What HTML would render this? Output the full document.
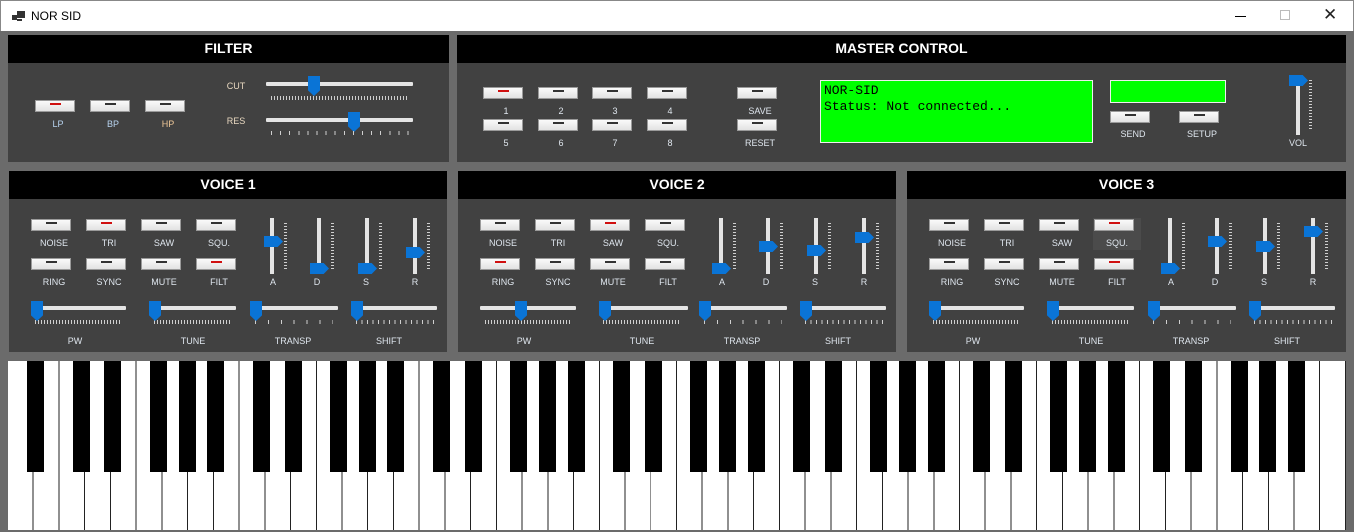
<!DOCTYPE html>
<html><head><meta charset="utf-8"><style>
*{margin:0;padding:0;box-sizing:border-box}
body{width:1354px;height:532px;background:#6b6b6b;position:relative;overflow:hidden;font-family:"Liberation Sans",Arial,sans-serif}
.a{position:absolute}
#title{left:0;top:0;width:1354px;height:31px;background:#fff;border:1px solid #888;border-bottom:none}
.hdr{position:absolute;background:#000;color:#fff;font-weight:bold;font-size:14px;text-align:center;line-height:27px}
.body{position:absolute;background:#414141}
.btn{position:absolute;width:40px;height:12px;background:linear-gradient(#fafafa,#e2e2e2);border:1px solid #9a9a9a}
.btn::after{content:"";position:absolute;left:14px;top:2px;width:11px;height:2px;background:#333}
.btn.r::after{background:#d01010}
.lb{position:absolute;color:#dfe6ee;font-size:9px;text-align:center;width:60px;margin-left:-30px}
.ht{position:absolute;height:4px;background:#e4e4e4;border-radius:1px}
.hth{position:absolute;width:12px;height:20px;background:#0a74d6;clip-path:polygon(0 0,100% 0,100% 72%,50% 100%,0 72%)}
.vt{position:absolute;width:4px;background:#e4e4e4}
.vth{position:absolute;width:19px;height:11px;background:#0a74d6;clip-path:polygon(0 0,72% 0,100% 50%,72% 100%,0 100%)}
.tk{position:absolute;height:4px;background:repeating-linear-gradient(90deg,#cfcfcf 0 1px,transparent 1px 3px)}
.vtk{position:absolute;width:3px;background:repeating-linear-gradient(180deg,#cfcfcf 0 1px,transparent 1px 3px)}
.v{position:absolute;top:171px;width:439px;height:181px}
.bk{position:absolute;top:361px;height:111px;width:17px;background:#000}
</style></head><body>
<div id="title" class="a">
 <div class="a" style="left:11px;top:14px;width:5px;height:5px;background:#333"></div>
 <div class="a" style="left:16px;top:10px;width:8px;height:7px;background:#333"></div>
 <div class="a" style="left:16px;top:18px;width:5px;height:2px;background:#333"></div>
 <div class="a" style="left:30px;top:8px;font-size:12px;color:#000">NOR SID</div>
 <div class="a" style="left:1234px;top:15px;width:11px;height:1px;background:#000"></div>
 <div class="a" style="left:1279px;top:9px;width:10px;height:10px;border:1px solid #bbb"></div>
 <div class="a" style="left:1322px;top:4px;font-size:17px;color:#222">✕</div>
</div>

<!-- FILTER -->
<div class="hdr" style="left:8px;top:35px;width:441px;height:28px">FILTER</div>
<div class="body" style="left:8px;top:63px;width:441px;height:99px"></div>
<div class="btn r" style="left:35px;top:100px"></div>
<div class="btn" style="left:90px;top:100px"></div>
<div class="btn" style="left:145px;top:100px"></div>
<div class="lb" style="left:58px;top:119px;color:#b8d4f0">LP</div>
<div class="lb" style="left:113px;top:119px;color:#b8d4f0">BP</div>
<div class="lb" style="left:168px;top:119px;color:#f0c898">HP</div>
<div class="lb" style="left:236px;top:81px;color:#e8d8c0">CUT</div>
<div class="lb" style="left:236px;top:116px;color:#e8d8c0">RES</div>
<div class="ht" style="left:266px;top:82px;width:147px"></div>
<div class="hth" style="left:308px;top:76px"></div>
<div class="tk" style="left:271px;top:96px;width:138px"></div>
<div class="ht" style="left:266px;top:118px;width:147px"></div>
<div class="hth" style="left:348px;top:112px"></div>
<div class="tk" style="left:271px;top:131px;width:138px;background:repeating-linear-gradient(90deg,#cfcfcf 0 1px,transparent 1px 9.1px)"></div>

<!-- MASTER -->
<div class="hdr" style="left:457px;top:35px;width:889px;height:28px">MASTER CONTROL</div>
<div class="body" style="left:457px;top:63px;width:889px;height:99px"></div>
<div class="btn r" style="left:483px;top:87px"></div><div class="btn" style="left:538px;top:87px"></div><div class="btn" style="left:592px;top:87px"></div><div class="btn" style="left:647px;top:87px"></div>
<div class="btn" style="left:483px;top:119px"></div><div class="btn" style="left:538px;top:119px"></div><div class="btn" style="left:592px;top:119px"></div><div class="btn" style="left:647px;top:119px"></div>
<div class="lb" style="left:506px;top:106px">1</div><div class="lb" style="left:561px;top:106px">2</div><div class="lb" style="left:615px;top:106px">3</div><div class="lb" style="left:670px;top:106px">4</div>
<div class="lb" style="left:506px;top:138px">5</div><div class="lb" style="left:561px;top:138px">6</div><div class="lb" style="left:615px;top:138px">7</div><div class="lb" style="left:670px;top:138px">8</div>
<div class="btn" style="left:737px;top:87px"></div><div class="btn" style="left:737px;top:119px"></div>
<div class="lb" style="left:760px;top:106px">SAVE</div><div class="lb" style="left:760px;top:138px">RESET</div>
<div class="a" style="left:820px;top:80px;width:273px;height:63px;background:#00ff00;border:1px solid #eee;font-family:'Liberation Mono',monospace;font-size:13px;line-height:16px;padding:2px 3px;color:#000">NOR-SID<br>Status: Not connected...</div>
<div class="a" style="left:1110px;top:80px;width:116px;height:23px;background:#00ff00;border:1px solid #eee"></div>
<div class="btn" style="left:1110px;top:111px"></div><div class="btn" style="left:1179px;top:111px"></div>
<div class="lb" style="left:1133px;top:129px">SEND</div><div class="lb" style="left:1202px;top:129px">SETUP</div>
<div class="vt" style="left:1296px;top:82px;height:53px"></div>
<div class="vth" style="left:1289px;top:75px"></div>
<div class="vtk" style="left:1309px;top:80px;height:50px"></div>
<div class="lb" style="left:1298px;top:138px">VOL</div>

<!-- VOICES -->
<div class="v" style="left:9px">
 <div class="hdr" style="left:0;top:0;width:438px;height:28px">VOICE 1</div>
 <div class="body" style="left:0;top:28px;width:438px;height:153px"></div>
 <div class="btn" style="left:22px;top:48px"></div><div class="btn r" style="left:77px;top:48px"></div><div class="btn" style="left:132px;top:48px"></div><div class="btn" style="left:187px;top:48px"></div>
 <div class="btn" style="left:22px;top:87px"></div><div class="btn" style="left:77px;top:87px"></div><div class="btn" style="left:132px;top:87px"></div><div class="btn r" style="left:187px;top:87px"></div>
 <div class="lb" style="left:45px;top:67px">NOISE</div><div class="lb" style="left:100px;top:67px">TRI</div><div class="lb" style="left:155px;top:67px">SAW</div><div class="lb" style="left:210px;top:67px">SQU.</div>
 <div class="lb" style="left:45px;top:106px">RING</div><div class="lb" style="left:100px;top:106px">SYNC</div><div class="lb" style="left:155px;top:106px">MUTE</div><div class="lb" style="left:210px;top:106px">FILT</div>
 <div class="vt" style="left:261px;top:47px;height:56px"></div><div class="vtk" style="left:275px;top:52px;height:47px"></div><div class="vth" style="left:255px;top:65px"></div>
 <div class="vt" style="left:308px;top:47px;height:56px"></div><div class="vtk" style="left:322px;top:52px;height:47px"></div><div class="vth" style="left:301px;top:92px"></div>
 <div class="vt" style="left:356px;top:47px;height:56px"></div><div class="vtk" style="left:370px;top:52px;height:47px"></div><div class="vth" style="left:349px;top:92px"></div>
 <div class="vt" style="left:404px;top:47px;height:56px"></div><div class="vtk" style="left:418px;top:52px;height:47px"></div><div class="vth" style="left:397px;top:76px"></div>
 <div class="lb" style="left:264px;top:106px">A</div><div class="lb" style="left:308px;top:106px">D</div><div class="lb" style="left:357px;top:106px">S</div><div class="lb" style="left:406px;top:106px">R</div>
 <div class="ht" style="left:26px;top:135px;width:91px"></div><div class="tk" style="left:26px;top:149px;width:85px"></div><div class="hth" style="left:22px;top:130px"></div>
 <div class="ht" style="left:141px;top:135px;width:86px"></div><div class="tk" style="left:145px;top:149px;width:77px"></div><div class="hth" style="left:140px;top:130px"></div>
 <div class="ht" style="left:241px;top:135px;width:88px"></div><div class="tk" style="left:246px;top:149px;width:78px;background:repeating-linear-gradient(90deg,#cfcfcf 0 1px,transparent 1px 12.9px)"></div><div class="hth" style="left:241px;top:130px"></div>
 <div class="ht" style="left:342px;top:135px;width:86px"></div><div class="tk" style="left:347px;top:149px;width:78px;background:repeating-linear-gradient(90deg,#cfcfcf 0 1px,transparent 1px 5.5px)"></div><div class="hth" style="left:342px;top:130px"></div>
 <div class="lb" style="left:66px;top:165px">PW</div><div class="lb" style="left:184px;top:165px">TUNE</div><div class="lb" style="left:284px;top:165px">TRANSP</div><div class="lb" style="left:380px;top:165px">SHIFT</div>
</div>

<div class="v" style="left:458px">
 <div class="hdr" style="left:0;top:0;width:438px;height:28px">VOICE 2</div>
 <div class="body" style="left:0;top:28px;width:438px;height:153px"></div>
 <div class="btn" style="left:22px;top:48px"></div><div class="btn" style="left:77px;top:48px"></div><div class="btn r" style="left:132px;top:48px"></div><div class="btn" style="left:187px;top:48px"></div>
 <div class="btn r" style="left:22px;top:87px"></div><div class="btn" style="left:77px;top:87px"></div><div class="btn" style="left:132px;top:87px"></div><div class="btn" style="left:187px;top:87px"></div>
 <div class="lb" style="left:45px;top:67px">NOISE</div><div class="lb" style="left:100px;top:67px">TRI</div><div class="lb" style="left:155px;top:67px">SAW</div><div class="lb" style="left:210px;top:67px">SQU.</div>
 <div class="lb" style="left:45px;top:106px">RING</div><div class="lb" style="left:100px;top:106px">SYNC</div><div class="lb" style="left:155px;top:106px">MUTE</div><div class="lb" style="left:210px;top:106px">FILT</div>
 <div class="vt" style="left:261px;top:47px;height:56px"></div><div class="vtk" style="left:275px;top:52px;height:47px"></div><div class="vth" style="left:254px;top:92px"></div>
 <div class="vt" style="left:308px;top:47px;height:56px"></div><div class="vtk" style="left:322px;top:52px;height:47px"></div><div class="vth" style="left:301px;top:70px"></div>
 <div class="vt" style="left:356px;top:47px;height:56px"></div><div class="vtk" style="left:370px;top:52px;height:47px"></div><div class="vth" style="left:349px;top:74px"></div>
 <div class="vt" style="left:404px;top:47px;height:56px"></div><div class="vtk" style="left:418px;top:52px;height:47px"></div><div class="vth" style="left:397px;top:61px"></div>
 <div class="lb" style="left:264px;top:106px">A</div><div class="lb" style="left:308px;top:106px">D</div><div class="lb" style="left:357px;top:106px">S</div><div class="lb" style="left:406px;top:106px">R</div>
 <div class="ht" style="left:22px;top:135px;width:96px"></div><div class="tk" style="left:27px;top:149px;width:86px"></div><div class="hth" style="left:57px;top:130px"></div>
 <div class="ht" style="left:141px;top:135px;width:89px"></div><div class="tk" style="left:145px;top:149px;width:77px"></div><div class="hth" style="left:141px;top:130px"></div>
 <div class="ht" style="left:241px;top:135px;width:88px"></div><div class="tk" style="left:246px;top:149px;width:78px;background:repeating-linear-gradient(90deg,#cfcfcf 0 1px,transparent 1px 12.9px)"></div><div class="hth" style="left:241px;top:130px"></div>
 <div class="ht" style="left:342px;top:135px;width:86px"></div><div class="tk" style="left:347px;top:149px;width:78px;background:repeating-linear-gradient(90deg,#cfcfcf 0 1px,transparent 1px 5.5px)"></div><div class="hth" style="left:342px;top:130px"></div>
 <div class="lb" style="left:66px;top:165px">PW</div><div class="lb" style="left:184px;top:165px">TUNE</div><div class="lb" style="left:284px;top:165px">TRANSP</div><div class="lb" style="left:380px;top:165px">SHIFT</div>
</div>

<div class="v" style="left:907px">
 <div class="hdr" style="left:0;top:0;width:439px;height:28px">VOICE 3</div>
 <div class="body" style="left:0;top:28px;width:439px;height:153px"></div>
 <div class="a" style="left:186px;top:47px;width:48px;height:32px;background:#4b4b4b"></div>
 <div class="btn" style="left:22px;top:48px"></div><div class="btn" style="left:77px;top:48px"></div><div class="btn" style="left:132px;top:48px"></div><div class="btn r" style="left:187px;top:48px"></div>
 <div class="btn" style="left:22px;top:87px"></div><div class="btn" style="left:77px;top:87px"></div><div class="btn" style="left:132px;top:87px"></div><div class="btn r" style="left:187px;top:87px"></div>
 <div class="lb" style="left:45px;top:67px">NOISE</div><div class="lb" style="left:100px;top:67px">TRI</div><div class="lb" style="left:155px;top:67px">SAW</div><div class="lb" style="left:210px;top:67px">SQU.</div>
 <div class="lb" style="left:45px;top:106px">RING</div><div class="lb" style="left:100px;top:106px">SYNC</div><div class="lb" style="left:155px;top:106px">MUTE</div><div class="lb" style="left:210px;top:106px">FILT</div>
 <div class="vt" style="left:261px;top:47px;height:56px"></div><div class="vtk" style="left:275px;top:52px;height:47px"></div><div class="vth" style="left:254px;top:92px"></div>
 <div class="vt" style="left:308px;top:47px;height:56px"></div><div class="vtk" style="left:322px;top:52px;height:47px"></div><div class="vth" style="left:301px;top:65px"></div>
 <div class="vt" style="left:356px;top:47px;height:56px"></div><div class="vtk" style="left:370px;top:52px;height:47px"></div><div class="vth" style="left:349px;top:70px"></div>
 <div class="vt" style="left:404px;top:47px;height:56px"></div><div class="vtk" style="left:418px;top:52px;height:47px"></div><div class="vth" style="left:397px;top:55px"></div>
 <div class="lb" style="left:264px;top:106px">A</div><div class="lb" style="left:308px;top:106px">D</div><div class="lb" style="left:357px;top:106px">S</div><div class="lb" style="left:406px;top:106px">R</div>
 <div class="ht" style="left:26px;top:135px;width:91px"></div><div class="tk" style="left:26px;top:149px;width:85px"></div><div class="hth" style="left:22px;top:130px"></div>
 <div class="ht" style="left:141px;top:135px;width:86px"></div><div class="tk" style="left:145px;top:149px;width:77px"></div><div class="hth" style="left:140px;top:130px"></div>
 <div class="ht" style="left:241px;top:135px;width:88px"></div><div class="tk" style="left:246px;top:149px;width:78px;background:repeating-linear-gradient(90deg,#cfcfcf 0 1px,transparent 1px 12.9px)"></div><div class="hth" style="left:241px;top:130px"></div>
 <div class="ht" style="left:342px;top:135px;width:86px"></div><div class="tk" style="left:347px;top:149px;width:78px;background:repeating-linear-gradient(90deg,#cfcfcf 0 1px,transparent 1px 5.5px)"></div><div class="hth" style="left:342px;top:130px"></div>
 <div class="lb" style="left:66px;top:165px">PW</div><div class="lb" style="left:184px;top:165px">TUNE</div><div class="lb" style="left:284px;top:165px">TRANSP</div><div class="lb" style="left:380px;top:165px">SHIFT</div>
</div>

<!-- KEYBOARD -->
<div class="a" style="left:8px;top:361px;width:1338px;height:169px;background:repeating-linear-gradient(90deg,#fff 0 24.73px,#222 24.73px 25.73px)"></div>
<div id="kb"></div>
<script>
var h='',w=25.73,n=['A','B','C','D','E','F','G'],off={A:2,C:-4,D:2,F:-4,G:-1};
for(var i=0;i<51;i++){var c=n[i%7];if(c in off){var x=8+(i+1)*w-8.5+off[c];h+='<div class="bk" style="left:'+x.toFixed(1)+'px"></div>';}}
document.getElementById('kb').innerHTML=h;
</script>
</body></html>
